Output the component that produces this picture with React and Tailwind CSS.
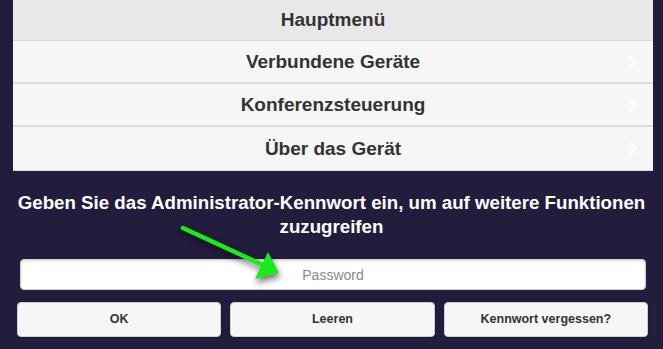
import React from "react";

const menuItems = ["Verbundene Geräte", "Konferenzsteuerung", "Über das Gerät"];

function Chevron() {
  return (
    <svg
      className="absolute right-[15px] top-1/2 -translate-y-1/2"
      width="9"
      height="12"
      viewBox="0 0 9 12"
    >
      <polyline
        points="2,1.5 6.5,6 2,10.5"
        fill="none"
        stroke="#ffffff"
        strokeWidth="2.8"
        strokeLinecap="square"
      />
    </svg>
  );
}

function Arrow() {
  return (
    <svg
      className="absolute left-0 top-0 pointer-events-none"
      width="663"
      height="349"
      style={{ filter: "drop-shadow(1px 4px 3px rgba(0,0,0,0.55))" }}
    >
      <line x1="183" y1="228" x2="263" y2="265" stroke="#19ea19" strokeWidth="4.5" strokeLinecap="round" />
      <polygon points="255,279 268,252 279,273" fill="#19ea19" />
    </svg>
  );
}

export default function App() {
  return (
    <div className="relative min-h-screen bg-[#221d3c] font-['Liberation_Sans',Arial,sans-serif] pb-3">
      <div className="ml-[13px] w-[640px] border-b border-[#dadada]">
        <div className="h-[41px] bg-[#e8e8e8] border-b border-[#d9d9d9] flex items-center justify-center text-[19px] font-bold text-[#333]">
          Hauptmenü
        </div>
        {menuItems.map((item, i) => (
          <div
            key={item}
            className={`relative h-[43px] pt-[2px] bg-[#f6f6f6] flex items-center justify-center text-[19px] font-bold text-[#333] ${
              i < menuItems.length - 1 ? "border-b-2 border-[#dcdcdc]" : ""
            }`}
          >
            {item}
            <Chevron />
          </div>
        ))}
      </div>

      <h2 className="mt-[20px] px-[8px] text-center text-white font-bold text-[18.7px] leading-6">
        Geben Sie das Administrator-Kennwort ein, um auf weitere Funktionen zuzugreifen
      </h2>

      <div className="mt-[20px] ml-[20px] w-[626px]">
        <input
          type="password"
          placeholder="Password"
          className="w-full h-[31px] bg-white rounded-[4px] border border-[#d0d0d0] shadow-[inset_0_1px_3px_rgba(0,0,0,0.15)] text-center text-[14px] text-[#333] placeholder:text-[#8a8a8a] outline-none"
        />
      </div>

      <div className="mt-[12px] ml-[17px] w-[631px] grid grid-cols-3 gap-[9px]">
        {["OK", "Leeren", "Kennwort vergessen?"].map((label) => (
          <button
            key={label}
            className="h-[35px] bg-[#f6f6f6] rounded-[4px] border border-[#cfcfcf] text-[12.5px] font-bold text-[#333] shadow-[0_1px_2px_rgba(0,0,0,0.15)]"
          >
            {label}
          </button>
        ))}
      </div>

      <Arrow />
    </div>
  );
}
